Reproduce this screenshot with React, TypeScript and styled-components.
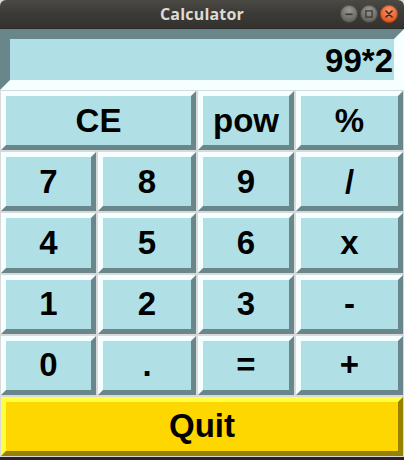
import React from 'react';
import styled, { createGlobalStyle } from 'styled-components';

const GlobalStyle = createGlobalStyle`
  html, body { margin: 0; padding: 0; background: #d9d9d9; }
  body { font-family: "Liberation Sans", Arial, sans-serif; }
`;

const LIGHT = '#f6ffff';
const DARK = '#69868a';

const Window = styled.div`
  width: 404px;
  height: 460px;
  display: flex;
  flex-direction: column;
  background: #d9d9d9;
  box-sizing: border-box;
  border-bottom: 3px solid #2b2027;
  overflow: hidden;
`;

const TitleBar = styled.div`
  height: 29px;
  flex: none;
  display: grid;
  grid-template-columns: 1fr auto 1fr;
  align-items: center;
  background: linear-gradient(#4a4944, #3c3b37 45%, #33322e);
  border-radius: 6px 6px 0 0;
  box-sizing: border-box;
  border-bottom: 1px solid #2a2926;
`;

const Title = styled.div`
  grid-column: 2;
  color: #dfdbd2;
  font: bold 16px "Open Sans", "Noto Sans", sans-serif;
  letter-spacing: 0.2px;
`;

const Controls = styled.div`
  grid-column: 3;
  justify-self: end;
  display: flex;
  gap: 2px;
  padding-right: 6px;
`;

const CtlButton = styled.div<{ $close?: boolean }>`
  width: 18px;
  height: 18px;
  border-radius: 50%;
  display: flex;
  align-items: center;
  justify-content: center;
  background: ${(p) =>
    p.$close
      ? 'radial-gradient(circle at 50% 30%, #f7946a, #e6561e 75%)'
      : 'radial-gradient(circle at 50% 30%, #9a9893, #615f5a 75%)'};
  box-shadow: inset 0 0 0 1px rgba(0, 0, 0, 0.3);
`;

const Display = styled.div`
  height: 61px;
  flex: none;
  box-sizing: border-box;
  border: 10px solid;
  border-color: ${DARK} ${LIGHT} ${LIGHT} ${DARK};
  background: #b0e0e6;
  display: flex;
  align-items: center;
  justify-content: flex-end;
  padding: 3px 1px 0 0;
  font: bold 33px "Liberation Sans", Arial, sans-serif;
  color: #000;
`;

const Keypad = styled.div`
  flex: 1;
  display: grid;
  grid-template-columns: 97px 100px 98px 109px;
  grid-auto-rows: 1fr;
`;

const Key = styled.button<{ $span?: number; $quit?: boolean }>`
  margin: 1px;
  grid-column: span ${(p) => p.$span ?? 1};
  border: 5px solid;
  border-color: ${(p) =>
    p.$quit ? '#ffff40 #998100 #998100 #ffff40' : `${LIGHT} ${DARK} ${DARK} ${LIGHT}`};
  background: ${(p) => (p.$quit ? '#ffd700' : '#b0e0e6')};
  font: bold 33px "Liberation Sans", Arial, sans-serif;
  color: #000;
  padding: 0;
  display: flex;
  align-items: center;
  justify-content: center;
  cursor: pointer;
`;

const keys: { label: string; span?: number }[] = [
  { label: 'CE', span: 2 },
  { label: 'pow' },
  { label: '%' },
  { label: '7' },
  { label: '8' },
  { label: '9' },
  { label: '/' },
  { label: '4' },
  { label: '5' },
  { label: '6' },
  { label: 'x' },
  { label: '1' },
  { label: '2' },
  { label: '3' },
  { label: '-' },
  { label: '0' },
  { label: '.' },
  { label: '=' },
  { label: '+' },
];

export default function App() {
  return (
    <>
      <GlobalStyle />
      <Window>
        <TitleBar>
          <Title>Calculator</Title>
          <Controls>
            <CtlButton>
              <svg width="8" height="8" viewBox="0 0 8 8">
                <rect x="0.5" y="3.5" width="7" height="1.6" fill="#3a3935" />
              </svg>
            </CtlButton>
            <CtlButton>
              <svg width="8" height="8" viewBox="0 0 8 8">
                <rect x="0.9" y="0.9" width="6.2" height="6.2" fill="none" stroke="#3a3935" strokeWidth="1.3" />
              </svg>
            </CtlButton>
            <CtlButton $close>
              <svg width="8" height="8" viewBox="0 0 8 8">
                <path d="M1 1 L7 7 M7 1 L1 7" stroke="#3c2a22" strokeWidth="1.6" strokeLinecap="round" />
              </svg>
            </CtlButton>
          </Controls>
        </TitleBar>
        <Display>99*2</Display>
        <Keypad>
          {keys.map((k) => (
            <Key key={k.label} $span={k.span}>
              {k.label}
            </Key>
          ))}
          <Key $span={4} $quit>
            Quit
          </Key>
        </Keypad>
      </Window>
    </>
  );
}
